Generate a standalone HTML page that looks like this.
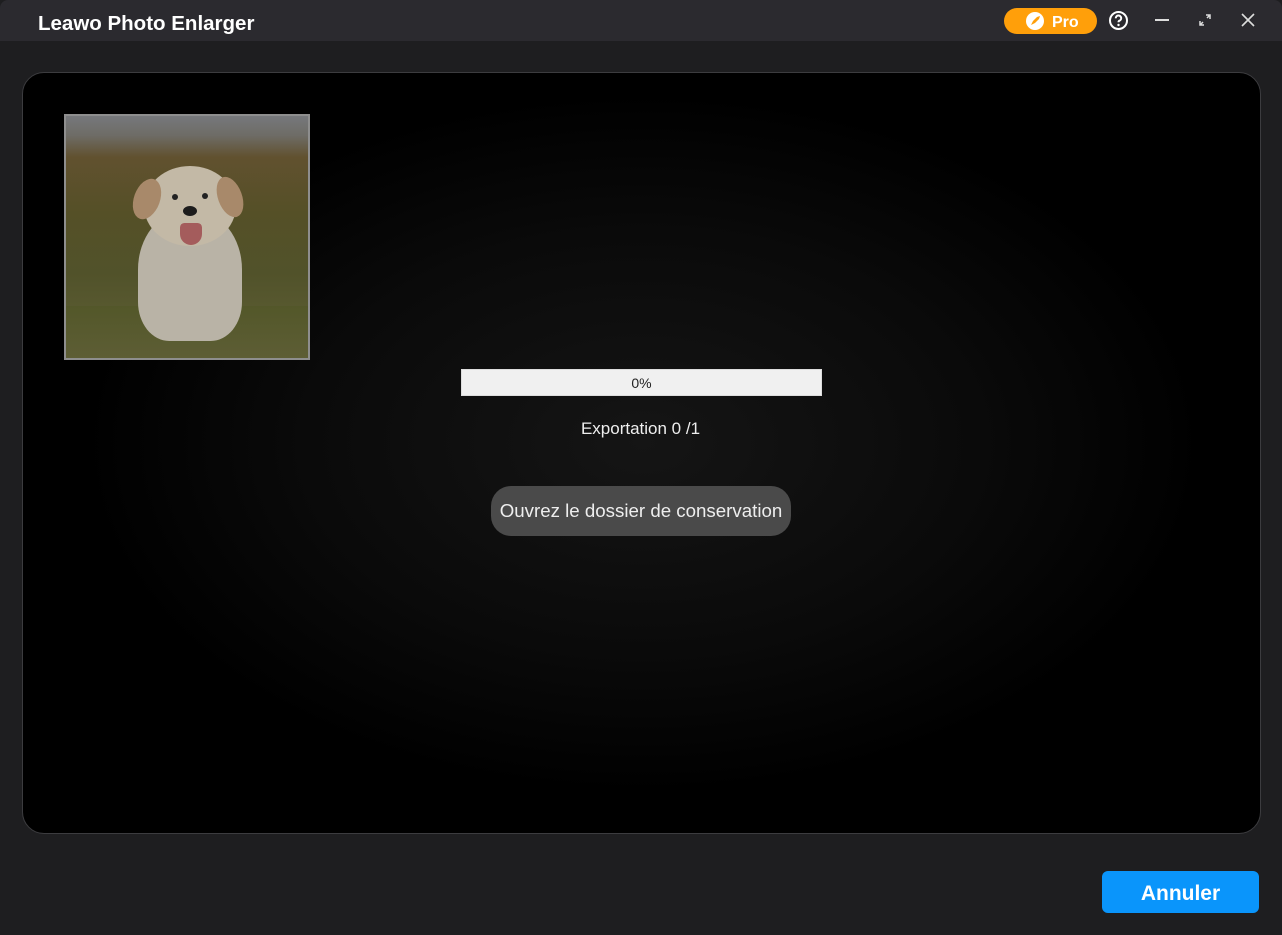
<!DOCTYPE html>
<html><head><meta charset="utf-8"><style>
*{margin:0;padding:0;box-sizing:border-box}
html,body{width:1282px;height:935px;overflow:hidden;background:#1e1e20;font-family:"Liberation Sans",sans-serif}
.title{position:absolute;left:0;top:0;width:1282px;height:41px;background:#2b2a2f;border-radius:8px 8px 0 0}
.title h1{position:absolute;left:38px;top:12px;font-size:20.5px;font-weight:bold;color:#fff}
.pro{position:absolute;left:1004px;top:8px;width:93px;height:26px;background:#ff9f0a;border-radius:13px;color:#fff;font-weight:bold;font-size:16px}
.panel{position:absolute;left:22px;top:72px;width:1239px;height:762px;border:1px solid #3c3c3f;border-radius:22px;background:radial-gradient(ellipse 560px 350px at 620px 370px,#151515 0%,#0a0a0a 60%,#000 100%);overflow:hidden}
.photo{position:absolute;left:41px;top:41px;width:246px;height:246px;border:2px solid #8e8e8e;overflow:hidden;background:linear-gradient(#76787c 0%,#6e6c66 8%,#61512f 17%,#555027 40%,#51522a 65%,#5a5b31 85%,#4e5327 100%)}
.bar{position:absolute;left:438px;top:296px;width:361px;height:27px;background:#f0f0f0;border:1px solid #ddd;text-align:center;font-size:14px;line-height:26px;color:#222}
.exp{position:absolute;left:0;width:100%;top:346px;text-align:center;color:#eee;font-size:17px;padding-right:2px}
.open{position:absolute;left:468px;top:413px;width:300px;height:50px;background:#4a4a4a;border-radius:20px;color:#eee;font-size:18.7px;text-align:center;line-height:50px}
.ann{position:absolute;left:1102px;top:871px;width:157px;height:42px;background:#0a95fb;border-radius:6px;color:#fff;font-weight:bold;font-size:21px;text-align:center;line-height:46px}
</style></head><body>
<div class="title"><h1>Leawo Photo Enlarger</h1>
<div class="pro"><svg style="position:absolute;left:22px;top:4px" width="18" height="18" viewBox="0 0 18 18"><circle cx="9" cy="9" r="9" fill="#fff"/><path d="M5 13l2-4 4-4 3-1-1 3-4 4z" fill="#ff9f0a"/></svg><span style="position:absolute;left:48px;top:6px">Pro</span></div>
<svg style="position:absolute;left:1108px;top:10px" width="21" height="21" viewBox="0 0 21 21"><circle cx="10.5" cy="10.5" r="8.5" fill="none" stroke="#fff" stroke-width="2"/><path d="M7.8 8.3a2.7 2.7 0 1 1 3.6 2.4c-.7.3-.9.8-.9 1.6" fill="none" stroke="#fff" stroke-width="2"/><circle cx="10.5" cy="15" r="1.2" fill="#fff"/></svg>
<div style="position:absolute;left:1155px;top:19px;width:14px;height:2px;background:#ddd"></div>
<svg style="position:absolute;left:1199px;top:14px" width="12" height="12" viewBox="0 0 12 12"><path d="M7 1h4v4M11 1L8 4M5 11H1V7M1 11l3-3" fill="none" stroke="#ddd" stroke-width="1.5"/></svg>
<svg style="position:absolute;left:1241px;top:13px" width="14" height="14" viewBox="0 0 14 14"><path d="M1 1l12 12M13 1L1 13" stroke="#ddd" stroke-width="1.6"/></svg>
</div>
<div class="panel">
<div class="photo">
<div style="position:absolute;left:0;top:190px;width:246px;height:56px;background:linear-gradient(#535729,#5e5e36)"></div>
<div style="position:absolute;left:72px;top:95px;width:104px;height:130px;background:#b9b3a6;border-radius:45% 45% 30% 30%"></div>
<div style="position:absolute;left:78px;top:50px;width:92px;height:80px;background:#c3b9a6;border-radius:50%"></div>
<div style="position:absolute;left:68px;top:62px;width:26px;height:42px;background:#a8896a;border-radius:50%;transform:rotate(20deg)"></div>
<div style="position:absolute;left:152px;top:60px;width:24px;height:42px;background:#a8896a;border-radius:50%;transform:rotate(-20deg)"></div>
<div style="position:absolute;left:106px;top:78px;width:6px;height:6px;background:#222;border-radius:50%"></div>
<div style="position:absolute;left:136px;top:77px;width:6px;height:6px;background:#222;border-radius:50%"></div>
<div style="position:absolute;left:117px;top:90px;width:14px;height:10px;background:#1c1c1c;border-radius:50%"></div>
<div style="position:absolute;left:114px;top:107px;width:22px;height:22px;background:#a45c5c;border-radius:20% 20% 50% 50%"></div>
</div>
<div class="bar">0%</div>
<div class="exp">Exportation 0 /1</div>
<div class="open">Ouvrez le dossier de conservation</div>
</div>
<div class="ann">Annuler</div>
</body></html>
